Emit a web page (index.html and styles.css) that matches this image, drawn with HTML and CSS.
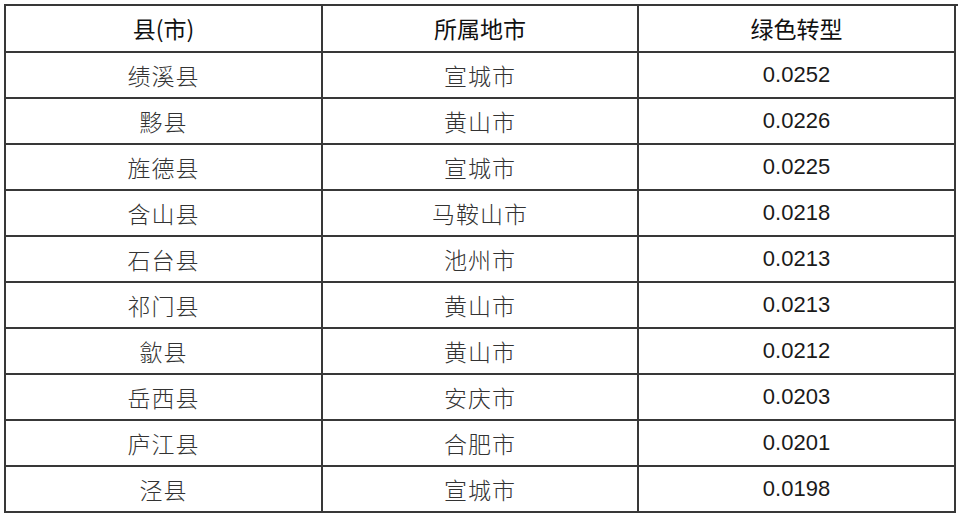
FILE: index.html
```html
<!DOCTYPE html>
<html lang="zh-CN">
<head>
<meta charset="utf-8">
<title>县(市)绿色转型</title>
<link rel="stylesheet" href="styles.css">
</head>
<body>
<div class="page">
  <div class="table">
    <div class="cell head">县(市)</div>
    <div class="cell head">所属地市</div>
    <div class="cell head">绿色转型</div>

    <div class="cell cn">绩溪县</div><div class="cell cn">宣城市</div><div class="cell num">0.0252</div>
    <div class="cell cn">黟县</div><div class="cell cn">黄山市</div><div class="cell num">0.0226</div>
    <div class="cell cn">旌德县</div><div class="cell cn">宣城市</div><div class="cell num">0.0225</div>
    <div class="cell cn">含山县</div><div class="cell cn">马鞍山市</div><div class="cell num">0.0218</div>
    <div class="cell cn">石台县</div><div class="cell cn">池州市</div><div class="cell num">0.0213</div>
    <div class="cell cn">祁门县</div><div class="cell cn">黄山市</div><div class="cell num">0.0213</div>
    <div class="cell cn">歙县</div><div class="cell cn">黄山市</div><div class="cell num">0.0212</div>
    <div class="cell cn">岳西县</div><div class="cell cn">安庆市</div><div class="cell num">0.0203</div>
    <div class="cell cn">庐江县</div><div class="cell cn">合肥市</div><div class="cell num">0.0201</div>
    <div class="cell cn">泾县</div><div class="cell cn">宣城市</div><div class="cell num">0.0198</div>
  </div>
</div>
</body>
</html>
```
FILE: styles.css
```css
html, body {
  margin: 0;
  padding: 0;
  background: #ffffff;
}
.page {
  width: 960px;
  height: 518px;
  padding: 4px 0 0 4px;
  box-sizing: border-box;
}
.table {
  display: grid;
  grid-template-columns: 317px 316px 317px;
  grid-template-rows: 47px repeat(10, 46px);
  width: 952px;
  border-top: 2px solid #383838;
  border-left: 2px solid #383838;
}
.cell {
  display: flex;
  align-items: center;
  justify-content: center;
  border-right: 2px solid #383838;
  border-bottom: 2px solid #383838;
  line-height: 1;
}
.head {
  font-family: "Noto Sans CJK SC", "Noto Sans", sans-serif;
  font-size: 23px;
  font-weight: 400;
  color: #111111;
  padding-bottom: 1px;
}
.cn {
  font-family: "Noto Sans CJK SC", "Noto Sans", sans-serif;
  font-size: 23px;
  font-weight: 300;
  color: #333333;
  letter-spacing: 1px;
}
.num {
  font-family: "Liberation Sans", Arial, sans-serif;
  font-size: 22px;
  color: #1a1a1a;
}
```
